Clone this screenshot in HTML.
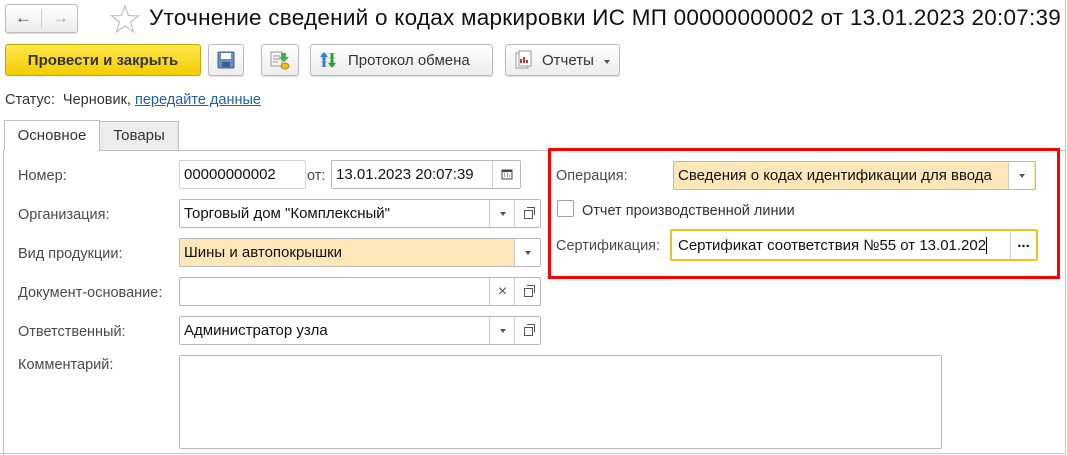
<!DOCTYPE html>
<html><head><meta charset="utf-8"><style>
*{box-sizing:border-box;margin:0;padding:0}
body{width:1067px;height:455px;background:#fff;font-family:"Liberation Sans",Arial,sans-serif;font-size:14.5px;color:#333;position:relative;overflow:hidden}
.a{position:absolute}
.btn{position:absolute;border:1px solid #bcbcbc;border-radius:3px;background:linear-gradient(#fff,#ececec);box-shadow:0 1px 1px rgba(0,0,0,.15)}
.fld{position:absolute;border:1px solid #b9b9b9;border-radius:2px;background:#fff;height:29px;color:#111;font-size:15px;line-height:28px;padding-left:4px;white-space:nowrap;overflow:hidden}
.lbl{position:absolute;color:#4a4a4a;font-size:14.5px}
.dd{position:absolute;top:0;width:26px;height:27px;border-left:1px solid #ccc}
.dd:after{content:"";position:absolute;left:10px;top:12px;border:3.5px solid transparent;border-top:4px solid #555}
.cp{position:absolute;top:0;width:26px;height:27px;border-left:1px solid #ccc}
.cp:before{content:"";position:absolute;left:9px;top:10px;width:7px;height:7px;border:1px solid #555;background:#fff}
.cp:after{content:"";position:absolute;left:12px;top:7px;width:7px;height:7px;border:1px solid #555;border-left:none;border-bottom:none}
</style></head><body>
<div class="a" style="left:0;top:0;width:1066px;height:454px;border:1px solid #c8c8c8;border-left:none;border-top:none"></div>
<!-- nav -->
<div class="btn" style="left:5px;top:4px;width:73px;height:29px"></div>
<div class="a" style="left:41px;top:9px;width:1px;height:19px;background:#d0d0d0"></div>
<div class="a" style="left:15px;top:8px;font-size:17px;color:#444;font-weight:bold">&#8592;</div>
<div class="a" style="left:52px;top:8px;font-size:17px;color:#aaa;font-weight:bold">&#8594;</div>
<svg class="a" style="left:110px;top:4px" width="30" height="30" viewBox="0 0 30 30"><path d="M15 2 L18.5 11.5 L28.5 11.8 L20.6 18 L23.5 27.8 L15 22 L6.5 27.8 L9.4 18 L1.5 11.8 L11.5 11.5 Z" fill="none" stroke="#c4c4c4" stroke-width="1.3"/></svg>
<div class="a" style="left:149px;top:5px;font-size:22.5px;color:#111;white-space:nowrap;letter-spacing:0.25px">Уточнение сведений о кодах маркировки ИС МП 00000000002 от 13.01.2023 20:07:39</div>
<!-- toolbar -->
<div class="a" style="left:5px;top:44px;width:196px;height:32px;border:1px solid #c9a800;border-radius:3px;background:linear-gradient(#ffe74a,#f3cc00);font-weight:bold;font-size:15px;color:#333;text-align:center;line-height:31px">Провести и закрыть</div>
<div class="btn" style="left:208px;top:44px;width:36px;height:32px"></div>
<svg class="a" style="left:217px;top:51px" width="18" height="18"><rect x="1" y="1" width="16" height="16" rx="1" fill="#6a8fc0" stroke="#3e5f8e"/><rect x="4" y="2" width="10" height="6" fill="#fff"/><rect x="5" y="11" width="8" height="5" fill="#3e5f8e"/></svg>
<div class="btn" style="left:261px;top:44px;width:38px;height:32px"></div>
<svg class="a" style="left:270px;top:50px" width="20" height="20"><rect x="1" y="2" width="11" height="14" fill="#f4f4f4" stroke="#999"/><path d="M3 6h7M3 9h7M3 12h5" stroke="#999"/><path d="M11 3h5v4h3l-5 5-5-5h2z" fill="#3bb34a"/><ellipse cx="15" cy="16" rx="4" ry="3" fill="#f0c020" stroke="#b08800"/></svg>
<div class="btn" style="left:310px;top:44px;width:183px;height:32px"></div>
<svg class="a" style="left:318px;top:50px" width="20" height="20"><path d="M2 4h16M2 8h16M2 12h16M2 16h16" stroke="#ccc"/><path d="M6 2l4 5h-2.5v10h-3V7H2z" fill="#2f7fd6"/><path d="M14 18l-4-5h2.5V3h3v10H18z" fill="#2aa03c"/></svg>
<div class="a" style="left:348px;top:52px;font-size:15px;color:#333">Протокол обмена</div>
<div class="btn" style="left:505px;top:44px;width:115px;height:32px"></div>
<svg class="a" style="left:513px;top:50px" width="20" height="20"><rect x="3" y="3" width="12" height="15" fill="#fff" stroke="#999"/><rect x="6" y="1" width="12" height="15" fill="#fff" stroke="#999"/><path d="M8 13V9M11 13V7M14 13V10" stroke="#d03030" stroke-width="2"/></svg>
<div class="a" style="left:542px;top:52px;font-size:15px;color:#333">Отчеты</div>
<div class="a" style="left:604px;top:60px;border:3.5px solid transparent;border-top:4px solid #555"></div>
<!-- status -->
<div class="a" style="left:5px;top:92px;font-size:14.5px;color:#333">Статус: &nbsp;Черновик, <span style="color:#1f5fb0;text-decoration:underline">передайте данные</span></div>
<!-- tabs -->
<div class="a" style="left:3px;top:150px;width:1063px;height:1px;background:#c0c0c0"></div>
<div class="a" style="left:3px;top:150px;width:1px;height:305px;background:#c0c0c0"></div>
<div class="a" style="left:4px;top:120px;width:96px;height:31px;border:1px solid #c0c0c0;border-bottom:none;background:#fff;font-size:15px;color:#333;text-align:center;line-height:30px">Основное</div>
<div class="a" style="left:99px;top:121px;width:80px;height:29px;border:1px solid #c0c0c0;border-bottom:none;background:#ececec;font-size:15px;color:#333;text-align:center;line-height:28px">Товары</div>
<!-- fields -->
<div class="lbl" style="left:18px;top:168px">Номер:</div>
<div class="fld" style="left:179px;top:160px;width:127px;border-color:#d3d3d3">00000000002</div>
<div class="lbl" style="left:307px;top:168px">от:</div>
<div class="fld" style="left:331px;top:160px;width:190px">13.01.2023 20:07:39<div class="a" style="left:160px;top:0;width:28px;height:27px;border-left:1px solid #ccc"><svg class="a" style="left:8px;top:7px" width="12" height="12"><rect x="1" y="2" width="10" height="9" fill="none" stroke="#444"/><rect x="1" y="2" width="10" height="2" fill="#444"/><path d="M3 6h1M6 6h1M9 6h0M3 8h1M6 8h1M8 8h1" stroke="#444"/></svg></div></div>

<div class="lbl" style="left:18px;top:207px">Организация:</div>
<div class="fld" style="left:179px;top:199px;width:362px">Торговый дом "Комплексный"<div class="dd" style="left:309px"></div><div class="cp" style="left:334px"></div></div>

<div class="lbl" style="left:18px;top:246px">Вид продукции:</div>
<div class="fld" style="left:179px;top:238px;width:362px;background:#fde7b8">Шины и автопокрышки<div class="dd" style="left:334px;background:#fff"></div></div>

<div class="lbl" style="left:18px;top:285px">Документ-основание:</div>
<div class="fld" style="left:179px;top:277px;width:362px"><div class="a" style="left:309px;top:0;width:26px;height:27px;border-left:1px solid #ccc;text-align:center;font-size:16px;color:#555">×</div><div class="cp" style="left:334px"></div></div>

<div class="lbl" style="left:18px;top:324px">Ответственный:</div>
<div class="fld" style="left:179px;top:316px;width:362px">Администратор узла<div class="dd" style="left:309px"></div><div class="cp" style="left:334px"></div></div>

<div class="lbl" style="left:18px;top:357px">Комментарий:</div>
<div class="a" style="left:179px;top:355px;width:763px;height:94px;border:1px solid #b9b9b9;border-radius:2px"></div>

<!-- right group -->
<div class="lbl" style="left:556px;top:168px">Операция:</div>
<div class="fld" style="left:673px;top:161px;width:363px;background:#fde7b8">Сведения о кодах идентификации для ввода<div class="dd" style="left:334px;background:#fff"></div></div>
<div class="a" style="left:557px;top:200px;width:17px;height:17px;border:1px solid #a0a0a0;border-radius:2px;background:#fff"></div>
<div class="lbl" style="left:582px;top:203px;color:#333">Отчет производственной линии</div>
<div class="lbl" style="left:556px;top:238px">Сертификация:</div>
<div class="fld" style="left:670px;top:229px;width:368px;height:32px;border:2px solid #f2c21a;line-height:30px;padding-left:6px">Сертификат соответствия №55 от 13.01.202<span style="border-left:1px solid #000"></span><div class="a" style="left:338px;top:0;width:26px;height:28px;border-left:1px solid #ccc;text-align:center;font-weight:bold;line-height:24px">...</div></div>
<div class="a" style="left:548px;top:148px;width:512px;height:131px;border:3px solid #f00"></div>
</body></html>
